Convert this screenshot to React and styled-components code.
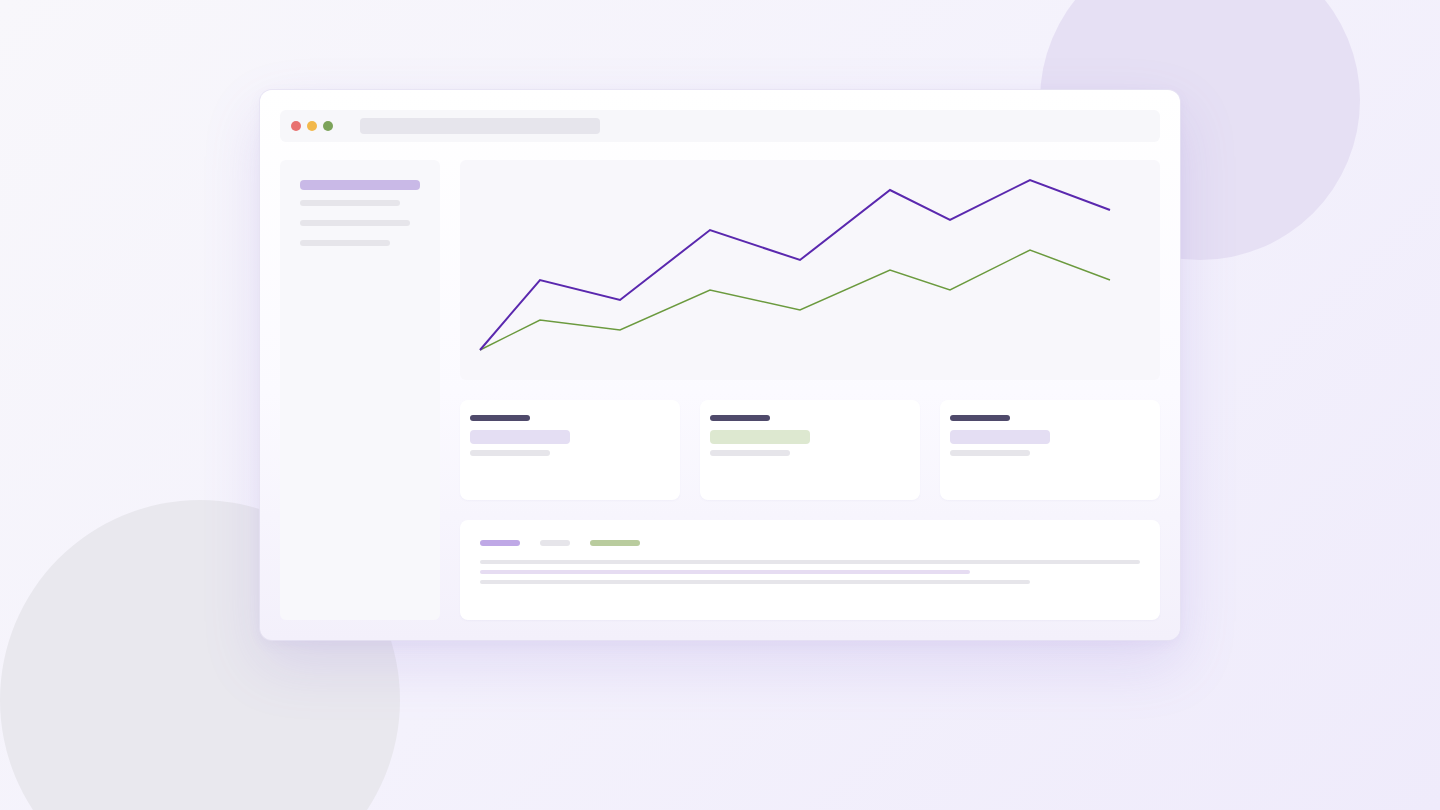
import React from "react";
import styled, { createGlobalStyle } from "styled-components";

const Global = createGlobalStyle`
  html, body { margin: 0; padding: 0; }
  body { font-family: "Inter", "Liberation Sans", sans-serif; }
`;

const Stage = styled.div`
  position: relative;
  width: 1440px;
  height: 810px;
  overflow: hidden;
  background: linear-gradient(135deg, #f8f7fb 0%, #f4f2fc 50%, #efebfb 100%);
  display: flex;
  align-items: flex-start;
  justify-content: center;
  padding-top: 90px;
  box-sizing: border-box;
`;

const Blob = styled.div`
  position: absolute;
  border-radius: 50%;
  width: ${(p) => p.$size}px;
  height: ${(p) => p.$size}px;
  left: ${(p) => p.$x}px;
  top: ${(p) => p.$y}px;
  background: ${(p) => p.$color};
`;

const Window = styled.div`
  position: relative;
  z-index: 1;
  width: 920px;
  height: 550px;
  box-sizing: border-box;
  padding: 20px;
  border-radius: 12px;
  background: linear-gradient(180deg, #ffffff 0%, #fbfaff 55%, #f3f0fb 100%);
  box-shadow: 0 0 0 1px rgba(230, 226, 242, 0.8), 0 24px 60px rgba(130, 100, 210, 0.16),
    0 4px 14px rgba(120, 100, 180, 0.06);
  display: flex;
  flex-direction: column;
  gap: 18px;
`;

const TitleBar = styled.div`
  height: 32px;
  border-radius: 6px;
  background: #f7f7fa;
  display: flex;
  align-items: center;
  padding-left: 11px;
  gap: 6px;
`;

const Dot = styled.span`
  width: 10px;
  height: 10px;
  border-radius: 50%;
  background: ${(p) => p.$color};
`;

const Address = styled.div`
  margin-left: 21px;
  width: 240px;
  height: 16px;
  border-radius: 4px;
  background: #e6e5ec;
`;

const Body = styled.div`
  flex: 1;
  display: flex;
  gap: 20px;
`;

const Sidebar = styled.div`
  width: 160px;
  border-radius: 6px;
  background: #f8f8fb;
  padding: 20px;
  box-sizing: border-box;
  display: flex;
  flex-direction: column;
  gap: 10px;
`;

const Bar = styled.div`
  width: ${(p) => p.$w}px;
  height: ${(p) => p.$h || 6}px;
  border-radius: ${(p) => p.$r || 3}px;
  background: ${(p) => p.$color || "#e6e5ea"};
  margin-top: ${(p) => p.$mt || 0}px;
  flex-shrink: 0;
`;

const Main = styled.div`
  flex: 1;
  display: flex;
  flex-direction: column;
  gap: 20px;
`;

const ChartPanel = styled.div`
  height: 220px;
  border-radius: 6px;
  background: #f8f7fb;
`;

const Cards = styled.div`
  display: grid;
  grid-template-columns: repeat(3, 1fr);
  gap: 20px;
  height: 100px;
`;

const Card = styled.div`
  background: #ffffff;
  border-radius: 8px;
  padding: 15px 10px;
  box-sizing: border-box;
  display: flex;
  flex-direction: column;
  gap: 9px;
  box-shadow: 0 1px 2px rgba(120, 110, 170, 0.05);
`;

const Panel = styled.div`
  height: 100px;
  background: #ffffff;
  border-radius: 8px;
  padding: 20px;
  box-sizing: border-box;
  display: flex;
  flex-direction: column;
  box-shadow: 0 1px 2px rgba(120, 110, 170, 0.05);
`;

const Tabs = styled.div`
  display: flex;
  gap: 20px;
  margin-bottom: 14px;
`;

const Lines = styled.div`
  display: flex;
  flex-direction: column;
  gap: 6px;
`;

const purple = [[20,190],[80,120],[160,140],[250,70],[340,100],[430,30],[490,60],[570,20],[650,50]];
const green = [[20,190],[80,160],[160,170],[250,130],[340,150],[430,110],[490,130],[570,90],[650,120]];
const pts = (a) => a.map((p) => p.join(",")).join(" ");

const Chart = () => (
  <svg width="700" height="220" viewBox="0 0 700 220">
    <polyline points={pts(green)} fill="none" stroke="#6b9a3e" strokeWidth="1.5" />
    <polyline points={pts(purple)} fill="none" stroke="#5a28ae" strokeWidth="2" />
  </svg>
);

const cardAccents = ["#e4def3", "#dde8d0", "#e4def3"];

export default function App() {
  return (
    <>
      <Global />
      <Stage>
        <Blob $size={320} $x={1040} $y={-60} $color="#e6e0f4" />
        <Blob $size={400} $x={0} $y={500} $color="#e9e8ee" />
        <Window>
          <TitleBar>
            <Dot $color="#e8716f" />
            <Dot $color="#f2b84b" />
            <Dot $color="#7ca35a" />
            <Address />
          </TitleBar>
          <Body>
            <Sidebar>
              <Bar $w={120} $h={10} $r={4} $color="#c9b9e7" />
              <Bar $w={100} />
              <Bar $w={110} $mt={4} />
              <Bar $w={90} $mt={4} />
            </Sidebar>
            <Main>
              <ChartPanel>
                <Chart />
              </ChartPanel>
              <Cards>
                {cardAccents.map((c, i) => (
                  <Card key={i}>
                    <Bar $w={60} $color="#4f4a6b" />
                    <Bar $w={100} $h={14} $r={4} $color={c} />
                    <Bar $w={80} $color="#e6e5ea" $mt={-3} />
                  </Card>
                ))}
              </Cards>
              <Panel>
                <Tabs>
                  <Bar $w={40} $color="#bfa8e6" />
                  <Bar $w={30} $color="#e6e5ea" />
                  <Bar $w={50} $color="#b9cc9e" />
                </Tabs>
                <Lines>
                  <Bar $w={660} $h={4} $r={2} $color="#e6e5ea" />
                  <Bar $w={490} $h={4} $r={2} $color="#e6dcf2" />
                  <Bar $w={550} $h={4} $r={2} $color="#e6e5ea" />
                </Lines>
              </Panel>
            </Main>
          </Body>
        </Window>
      </Stage>
    </>
  );
}
